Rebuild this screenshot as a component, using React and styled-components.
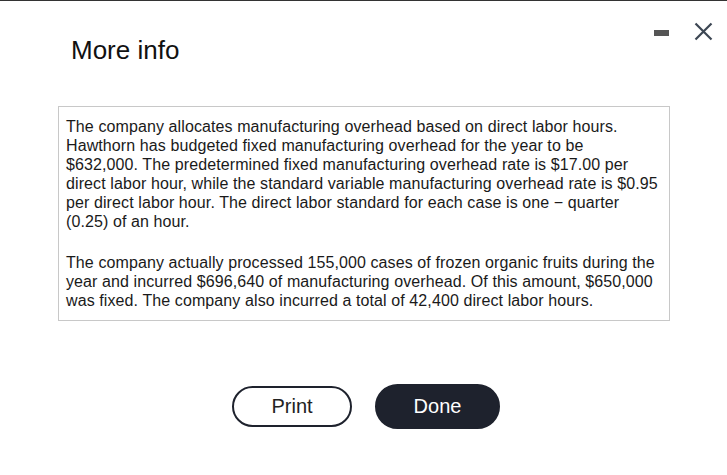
import React from 'react';
import styled, { createGlobalStyle } from 'styled-components';

const Global = createGlobalStyle`
  html, body {
    margin: 0;
    padding: 0;
    background: #fff;
  }
  body {
    font-family: "Liberation Sans", Arial, sans-serif;
  }
`;

const Dialog = styled.div`
  width: 727px;
  height: 475px;
  box-sizing: border-box;
  border-top: 1px solid #333;
  display: flex;
  flex-direction: column;
`;

const Header = styled.div`
  display: flex;
  align-items: flex-start;
  justify-content: space-between;
  padding: 34px 14px 0 71px;
  height: 70px;
  box-sizing: border-box;
`;

const Title = styled.h2`
  margin: 0;
  font-size: 26px;
  font-weight: 400;
  color: #111;
  line-height: 30px;
`;

const Controls = styled.div`
  display: flex;
  align-items: center;
  gap: 22px;
  margin-top: -14px;
`;

const IconButton = styled.button`
  border: none;
  background: transparent;
  padding: 0;
  width: 20px;
  height: 20px;
  display: flex;
  align-items: center;
  justify-content: center;
  cursor: pointer;
`;

const Minus = styled.span`
  display: block;
  width: 15px;
  height: 6px;
  background: #555;
  margin-top: 3px;
`;

const Body = styled.div`
  margin: 35px 0 0 58px;
  width: 612px;
  box-sizing: border-box;
  border: 1px solid #c8c8c8;
  padding: 10px 7px 10px 7px;
  color: #1a1a1a;
  font-size: 16px;
  line-height: 19px;
  letter-spacing: 0.1px;
`;

const Para = styled.p`
  margin: 0 0 22px;
  &:last-child {
    margin-bottom: 0;
  }
`;

const Line = styled.span`
  display: block;
  white-space: nowrap;
`;

const Footer = styled.div`
  display: flex;
  justify-content: center;
  align-items: center;
  gap: 23px;
  margin-top: auto;
  padding: 0 0 46px 5px;
`;

const Btn = styled.button`
  font-family: "Liberation Sans", Arial, sans-serif;
  font-size: 20px;
  border-radius: 999px;
  cursor: pointer;
  box-sizing: border-box;
  width: ${p => (p.primary ? '125px' : '120px')};
  height: ${p => (p.primary ? '45px' : '41px')};
  border: 2px solid #1e222d;
  background: ${p => (p.primary ? '#1e222d' : '#fff')};
  color: ${p => (p.primary ? '#fff' : '#222')};
  padding: 0;
`;

const paragraphs = [
  [
    'The company allocates manufacturing overhead based on direct labor hours.',
    'Hawthorn has budgeted fixed manufacturing overhead for the year to be',
    '$632,000. The predetermined fixed manufacturing overhead rate is $17.00 per',
    'direct labor hour, while the standard variable manufacturing overhead rate is $0.95',
    'per direct labor hour. The direct labor standard for each case is one − quarter',
    '(0.25) of an hour.',
  ],
  [
    'The company actually processed 155,000 cases of frozen organic fruits during the',
    'year and incurred $696,640 of manufacturing overhead. Of this amount, $650,000',
    'was fixed. The company also incurred a total of 42,400 direct labor hours.',
  ],
];

export default function App() {
  return (
    <>
      <Global />
      <Dialog>
        <Header>
          <Title>More info</Title>
          <Controls>
            <IconButton aria-label="Minimize">
              <Minus />
            </IconButton>
            <IconButton aria-label="Close">
              <svg width="19" height="19" viewBox="0 0 19 19">
                <path d="M1.5 1.5 L17.5 17.5 M17.5 1.5 L1.5 17.5" stroke="#3c4653" strokeWidth="2.2" fill="none" />
              </svg>
            </IconButton>
          </Controls>
        </Header>
        <Body>
          {paragraphs.map((lines, i) => (
            <Para key={i}>
              {lines.map((l, j) => (
                <Line key={j}>{l}</Line>
              ))}
            </Para>
          ))}
        </Body>
        <Footer>
          <Btn>Print</Btn>
          <Btn primary>Done</Btn>
        </Footer>
      </Dialog>
    </>
  );
}
